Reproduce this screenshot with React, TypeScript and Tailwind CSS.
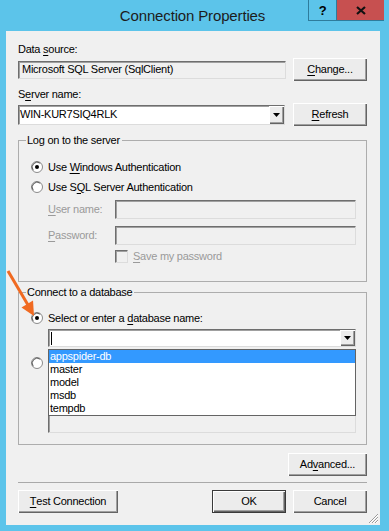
import React from 'react';

const sunken =
  'border border-t-[#6e6e6e] border-l-[#6e6e6e] border-r-[#dcdcdc] border-b-[#dcdcdc] shadow-[inset_1px_1px_0_#a0a0a0]';
const raised =
  'bg-[#ececec] shadow-[inset_1px_1px_0_#ffffff,inset_-1px_-1px_0_#646464,inset_-2px_-2px_0_#a0a0a0]';

function U({ children }: { children: React.ReactNode }) {
  return <span className="underline underline-offset-[2px] decoration-1">{children}</span>;
}

function Radio({ checked }: { checked?: boolean }) {
  return (
    <svg width="12" height="12" viewBox="0 0 12 12" className="shrink-0">
      <circle cx="6" cy="6" r="5.5" fill="#ffffff" stroke="#8a8a8a" />
      <path d="M2.2 9.2 A5 5 0 0 1 9.2 2.2" fill="none" stroke="#5a5a5a" strokeWidth="1" />
      {checked && <circle cx="6" cy="6" r="2" fill="#000000" />}
    </svg>
  );
}

function Button({ children, className = '', isDefault = false }: { children: React.ReactNode; className?: string; isDefault?: boolean }) {
  return (
    <button
      className={`h-[23px] flex items-center justify-center ${raised} ${isDefault ? 'border border-[#3a3a3a]' : ''} ${className}`}
    >
      {children}
    </button>
  );
}

function DropArrow() {
  return (
    <div className={`w-[15px] h-full flex items-center justify-center ${raised}`}>
      <svg width="7" height="4" viewBox="0 0 7 4">
        <polygon points="0,0 7,0 3.5,4" fill="#000" />
      </svg>
    </div>
  );
}

export default function App() {
  const items = ['appspider-db', 'master', 'model', 'msdb', 'tempdb'];

  return (
    <div className="relative w-[389px] h-[531px] bg-[#5cc4ea] flex flex-col font-['Liberation_Sans',Arial,sans-serif] text-[11px] leading-[13px] tracking-[-0.25px] text-black">
      {/* title bar */}
      <div className="h-[31px] flex items-start shrink-0">
        <div className="flex-1 h-[31px] flex items-center justify-center pl-[77px] text-[15px] tracking-[-0.15px] text-[#1c1c1c]">
          Connection Properties
        </div>
        <div className="flex h-[21px] mr-[5px] border-b border-[#2e7c9c]">
          <div className="w-[28px] border-l border-[#2e7c9c] flex items-center justify-center font-bold text-[13px]">?</div>
          <div className="w-[48px] bg-[#c75050] border-l border-[#2e7c9c] flex items-center justify-center">
            <svg width="10" height="9" viewBox="0 0 10 9">
              <path d="M1 1 L9 8 M9 1 L1 8" stroke="#111" strokeWidth="2.2" />
            </svg>
          </div>
        </div>
      </div>

      {/* client area */}
      <div className="relative ml-[6px] mr-[9px] h-[494px] bg-[#f0f0f0] pl-[12px] pr-[13px] flex flex-col">
        <div className="mt-[12px]">
          Data <U>s</U>ource:
        </div>
        <div className="mt-[2px] flex items-center gap-[7px]">
          <div className={`w-[268px] h-[18px] bg-[#f0f0f0] pl-[3px] flex items-center ${sunken}`}>Microsoft SQL Server (SqlClient)</div>
          <Button className="w-[74px]">
            <U>C</U>hange...
          </Button>
        </div>

        <div className="mt-[7px]">
          S<U>e</U>rver name:
        </div>
        <div className="mt-[2px] flex items-center gap-[8px]">
          <div className={`w-[267px] h-[20px] bg-white flex items-center pl-[1px] ${sunken}`}>
            <span className="flex-1">WIN-KUR7SIQ4RLK</span>
            <DropArrow />
          </div>
          <Button className="w-[74px]">
            <U>R</U>efresh
          </Button>
        </div>

        {/* log on group */}
        <div className="relative mt-[14px] h-[142px] border border-[#adadad] pl-[12px] pt-[18px] pr-[10px] flex flex-col">
          <span className="absolute left-[7px] -top-[7px] pl-[1px] pr-[2px] bg-[#f0f0f0]">Log on to the server</span>
          <div className="flex items-center gap-[5px] h-[16px]">
            <Radio checked />
            <span>
              Use <U>W</U>indows Authentication
            </span>
          </div>
          <div className="flex items-center gap-[5px] h-[16px] mt-[4px]">
            <Radio />
            <span>
              Use S<U>Q</U>L Server Authentication
            </span>
          </div>
          <div className="flex items-center ml-[17px] mt-[5px] h-[19px] text-[#9a9a9a]">
            <span className="w-[67px]">
              <U>U</U>ser name:
            </span>
            <div className={`flex-1 h-full bg-[#f0f0f0] ${sunken}`} />
          </div>
          <div className="flex items-center ml-[17px] mt-[7px] h-[19px] text-[#9a9a9a]">
            <span className="w-[67px]">
              <U>P</U>assword:
            </span>
            <div className={`flex-1 h-full bg-[#f0f0f0] ${sunken}`} />
          </div>
          <div className="flex items-center ml-[84px] mt-[5px] h-[13px] gap-[5px] text-[#9a9a9a]">
            <div className={`w-[13px] h-[13px] bg-[#f0f0f0] ${sunken}`} />
            <span>
              <U>S</U>ave my password
            </span>
          </div>
        </div>

        {/* database group */}
        <div className="relative mt-[10px] h-[153px] border border-[#adadad] pl-[12px] pt-[17px] pr-[10px] flex flex-col">
          <span className="absolute left-[7px] -top-[7px] pl-[1px] pr-[2px] bg-[#f0f0f0]">Connect to a database</span>
          <div className="flex items-center gap-[5px] h-[16px]">
            <Radio checked />
            <span>
              Select or enter a <U>d</U>atabase name:
            </span>
          </div>
          <div className="relative ml-[17px] mt-[3px]">
            <div className={`h-[18px] bg-white flex items-center pl-[2px] ${sunken}`}>
              <span className="flex-1 flex items-center">
                <span className="w-px h-[13px] bg-black" />
              </span>
              <DropArrow />
            </div>
            {/* open dropdown list */}
            <div className="absolute z-10 left-0 right-0 top-[20px] bg-white border border-[#646464]">
              {items.map((item, i) => (
                <div
                  key={item}
                  className={`h-[13px] pl-[1px] flex items-center ${i === 0 ? 'bg-[#3399ff] text-white' : ''}`}
                >
                  {item}
                </div>
              ))}
            </div>
          </div>
          <div className="flex items-center gap-[5px] h-[16px] mt-[8px]">
            <Radio />
          </div>
          <div className={`ml-[17px] mt-[13px] h-[49px] bg-[#f0f0f0] ${sunken}`} />
        </div>

        <Button className="mt-[8px] self-end w-[79px]">
          Ad<U>v</U>anced...
        </Button>

        <div className="mt-[6px] h-px bg-[#a9a9a9]" />

        <div className="mt-[7px] flex items-center gap-[7px]">
          <Button className="w-[100px]">
            <U>T</U>est Connection
          </Button>
          <Button className="ml-auto w-[74px]" isDefault>
            OK
          </Button>
          <Button className="w-[74px]">Cancel</Button>
        </div>

        {/* size grip */}
        <svg className="absolute right-[1px] bottom-[1px]" width="12" height="12" viewBox="0 0 12 12">
          <path d="M11 2 L2 11 M11 5 L5 11 M11 8 L8 11" stroke="#9a9a9a" strokeWidth="1" />
          <path d="M11 3 L3 11 M11 6 L6 11 M11 9 L9 11" stroke="#ffffff" strokeWidth="1" />
        </svg>
      </div>

      {/* annotation arrow */}
      <svg className="absolute left-0 top-0 pointer-events-none z-20" width="389" height="531">
        <line x1="8" y1="271" x2="28" y2="305" stroke="#f06a21" strokeWidth="3" />
        <polygon points="34,316 21.5,307.5 33,300.5" fill="#f06a21" />
      </svg>
    </div>
  );
}
